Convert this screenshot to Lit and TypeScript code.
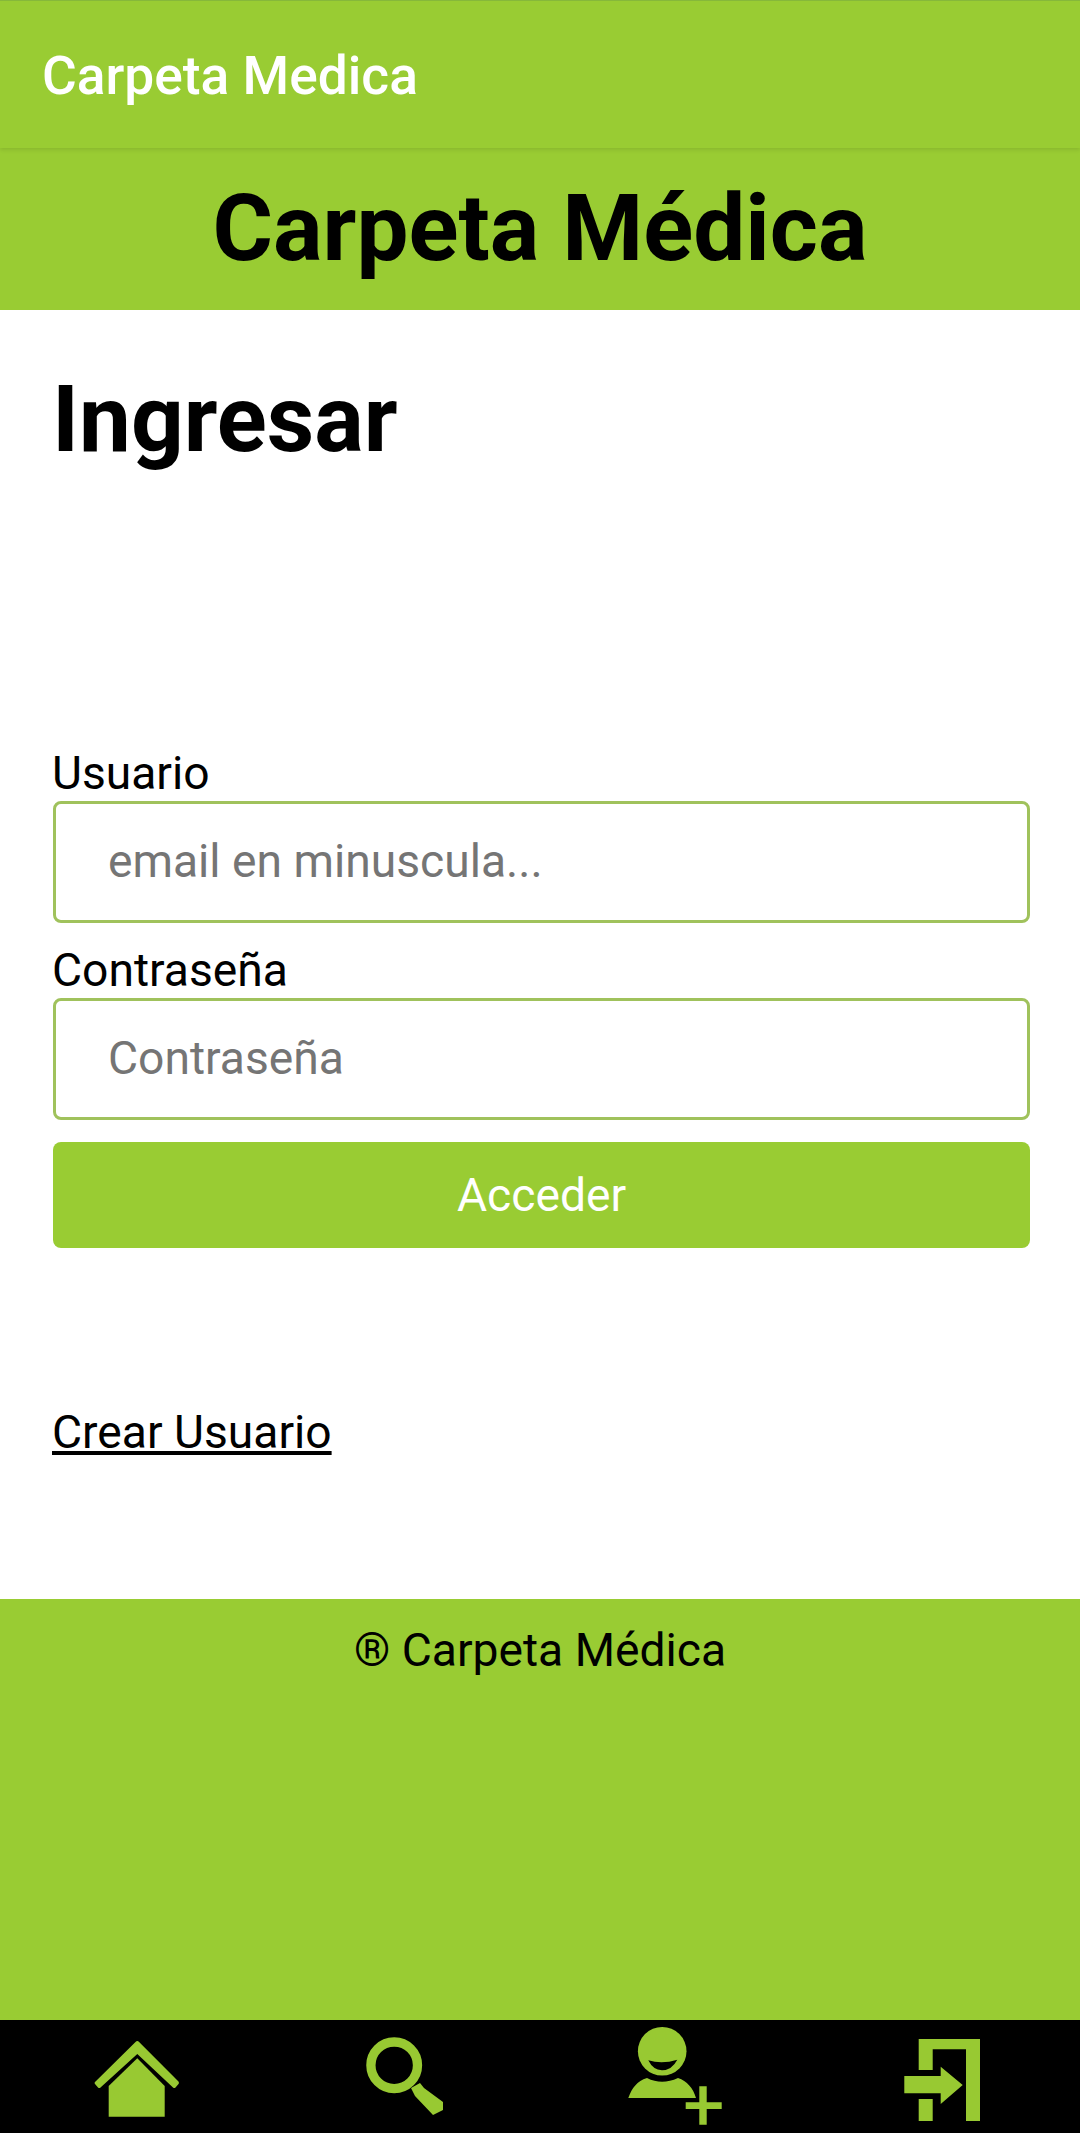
import { LitElement, html, css } from "lit";
import { customElement } from "lit/decorators.js";

@customElement("app-root")
export class AppRoot extends LitElement {
  static styles = css`
    :host { display: block; font-family: Roboto, "Liberation Sans", sans-serif; color: #000; background: #fff; }
    .page { display: flex; flex-direction: column; height: 2133px; overflow: hidden; }
    .bar { flex: none; background: #99cc33; border-top: 1px solid #86b83a; display: flex; align-items: center; padding: 3px 0 0 42px; box-sizing: border-box; color: #fff; font-size: 53.300px; font-weight: 500; box-shadow: 0 2px 4px rgba(0,0,0,.1); position: relative; height: 148px; }
    .banner { flex: none; height: 162px; background: #99cc33; display: flex; align-items: center; justify-content: center; margin: 0; font-size: 92.500px; font-weight: 700; line-height: 1; }
    main { flex: none; height: 1289px; box-sizing: border-box; padding: 0 50px 0 53px; display: flex; flex-direction: column; }
    h2 { margin: 57px 0 0 -1px; font-size: 92.500px; font-weight: 700; line-height: 106px; }
    label { font-size: 46.200px; line-height: 53px; display: block; margin-left: -1px; }
    .user { margin-top: 274px; }
    .pass { margin-top: 21px; }
    .field { height: 122px; box-sizing: border-box; border: 3px solid #a0c25c; border-radius: 8px; margin-top: 1px; display: flex; align-items: center; padding: 0 0 3px 52px; font-size: 46.200px; color: #757575; }
    .btn { margin-top: 22px; height: 106px; border-radius: 8px; background: #99cc33; color: #fff; font-size: 46.200px; display: flex; align-items: center; justify-content: center; padding-bottom: 1px; box-sizing: border-box; }
    .link { margin-top: 158px; margin-left: -1px; font-size: 46.200px; line-height: 53px; color: #000; text-decoration: underline; align-self: flex-start; }
    footer { flex: 1; background: #99cc33; text-align: center; font-size: 46.200px; line-height: 53px; padding-top: 25px; }
    nav { flex: none; height: 113px; background: #000; display: grid; grid-template-columns: repeat(4, 1fr); }
    nav div { display: flex; justify-content: center; }
    svg { width: 130px; height: 113px; display: block; fill: #98c932; }
  `;

  render() {
    return html`<div class="page">
      <header class="bar">Carpeta Medica</header>
      <h1 class="banner">Carpeta Médica</h1>
      <main>
        <h2>Ingresar</h2>
        <label class="user">Usuario</label>
        <div class="field">email en minuscula...</div>
        <label class="pass">Contraseña</label>
        <div class="field">Contraseña</div>
        <div class="btn">Acceder</div>
        <a class="link">Crear Usuario</a>
      </main>
      <footer>® Carpeta Médica</footer>
      <nav>
        <div><svg viewBox="0 0 130 113"><path d="M65.500 22Q67.300 20 69.100 22L108.500 61.500Q109.500 63 108.500 64L105.500 67.500Q104.300 68.500 103 67.500L67.300 34 30.500 67.500Q29.300 68.500 28 67.500L25 64Q24 63 25 62Z"/><path d="M67.300 38.300 94.700 66V96.700H38.700V66Z"/></svg></div>
        <div><svg viewBox="0 0 130 113"><circle cx="54.200" cy="45.300" r="23.300" fill="none" stroke="#98c932" stroke-width="9.300"/><path d="M71 68 80 63 84 68 103 82 103 90 93 95 75 76Z"/></svg></div>
        <div><svg viewBox="0 0 130 113"><circle cx="52.200" cy="31.300" r="24.300"/><path d="M38.300 40.300Q52 44.500 67.300 39.700 62 50 52 50.300 43 50 38.300 40.300Z" fill="#000"/><path d="M18.300 78C22 68 27 61 37 58 47 63 57 63 68 58 77 61 83 68 86 78Z"/><path d="M89.300 66.300H96.700V82.300H111.700V89H96.700V104.700H89.300V89H75.700V82.300H89.300Z"/></svg></div>
        <div><svg viewBox="0 0 130 113"><path d="M38.700 19H100V101H86V29.300H52.700V50H38.700Z"/><path d="M38.700 79H52.700V101H38.700Z"/><path d="M24.300 56H60.700V46.700L82.700 65 60.700 84V73.300H24.300Z"/></svg></div>
      </nav>
    </div>`;
  }
}
